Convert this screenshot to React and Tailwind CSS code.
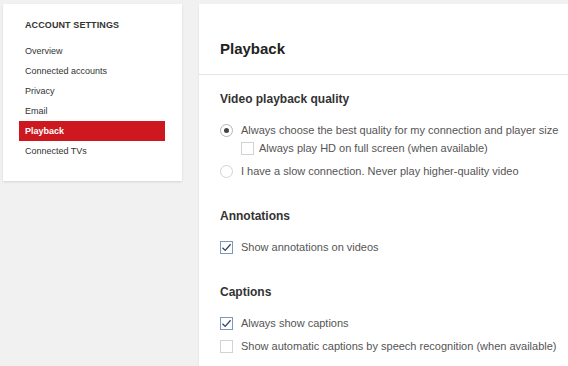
import React from "react"

const navItems = ["Overview", "Connected accounts", "Privacy", "Email", "Playback", "Connected TVs"]

function Radio({ checked }) {
  return (
    <span className={"flex h-[13px] w-[13px] shrink-0 items-center justify-center rounded-full border bg-white " + (checked ? "border-[#b5b5b5]" : "border-[#d3d3d3]")}>
      {checked && <span className="h-[5px] w-[5px] rounded-full bg-[#444]"></span>}
    </span>
  )
}

function Check({ checked }) {
  return (
    <span className={"flex h-[13px] w-[13px] shrink-0 items-center justify-center border bg-white " + (checked ? "border-[#8197b8]" : "border-[#d3d3d3]")}>
      {checked && (
        <svg width="11" height="11" viewBox="0 0 11 11">
          <path d="M1.5 5.8 L4.2 8.4 L9.6 2.2" fill="none" stroke="#33425e" strokeWidth="1.3" />
        </svg>
      )}
    </span>
  )
}

function Option({ control, children, indent }) {
  return (
    <div className={"flex h-4 items-center text-[11px] leading-4 text-[#555] " + (indent ? "gap-[5px] pl-[21px]" : "gap-[8px]")}>
      {control}
      <span>{children}</span>
    </div>
  )
}

function Section({ title, children }) {
  return (
    <div className="flex flex-col">
      <h3 className="mb-[15px] text-[12px] font-bold leading-4 text-[#333]">{title}</h3>
      <div className="flex flex-col gap-[7px]">{children}</div>
    </div>
  )
}

export default function App() {
  return (
    <div className="flex min-h-[366px] gap-[17px] bg-[#f1f1f1] pl-[3px] pt-[4px] font-['Liberation_Sans',Arial,sans-serif]">
      {/* sidebar */}
      <div className="h-fit w-[179px] shrink-0 bg-white pb-[20px] pl-[16px] pr-[17px] pt-[15px] shadow-[0_1px_2px_rgba(0,0,0,0.12)]">
        <div className="pl-[6px] text-[9px] font-bold leading-3 tracking-[0.1px] text-[#333]">ACCOUNT SETTINGS</div>
        <ul className="mt-[10px] flex flex-col">
          {navItems.map((item) => (
            <li
              key={item}
              className={"h-5 pl-[6px] text-[9px] leading-5 " + (item === "Playback" ? "bg-[#cc181e] font-bold text-white" : "text-[#333]")}
            >
              {item}
            </li>
          ))}
        </ul>
      </div>

      {/* main panel */}
      <div className="flex-1 bg-white shadow-[0_1px_2px_rgba(0,0,0,0.1)]">
        <div className="border-b border-[#e5e5e5] pb-[15px] pl-[21px] pt-[35px]">
          <h2 className="text-[15px] font-bold leading-5 text-[#222]">Playback</h2>
        </div>
        <div className="flex flex-col gap-[29px] pl-[21px] pt-[16px]">
          <Section title="Video playback quality">
            <Option control={<Radio checked />}>Always choose the best quality for my connection and player size</Option>
            <div className="-mt-[5px]">
              <Option indent control={<Check />}>Always play HD on full screen (when available)</Option>
            </div>
            <Option control={<Radio />}>I have a slow connection. Never play higher-quality video</Option>
          </Section>
          <Section title="Annotations">
            <Option control={<Check checked />}>Show annotations on videos</Option>
          </Section>
          <Section title="Captions">
            <Option control={<Check checked />}>Always show captions</Option>
            <Option control={<Check />}>Show automatic captions by speech recognition (when available)</Option>
          </Section>
        </div>
      </div>
    </div>
  )
}
